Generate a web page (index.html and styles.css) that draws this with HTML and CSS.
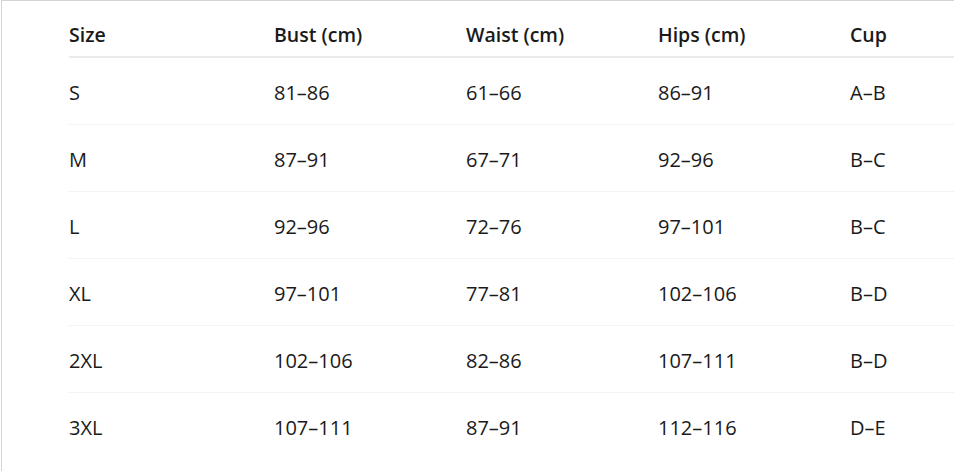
FILE: index.html
```html
<!DOCTYPE html>
<html lang="en">
<head>
<meta charset="utf-8">
<link rel="stylesheet" href="styles.css">
</head>
<body>
<div class="frame">
  <table class="sizes">
    <colgroup>
      <col class="c1"><col class="c2"><col class="c3"><col class="c4"><col class="c5">
    </colgroup>
    <thead>
      <tr><th>Size</th><th>Bust (cm)</th><th>Waist (cm)</th><th>Hips (cm)</th><th>Cup</th></tr>
    </thead>
    <tbody>
      <tr><td>S</td><td>81–86</td><td>61–66</td><td>86–91</td><td>A–B</td></tr>
      <tr><td>M</td><td>87–91</td><td>67–71</td><td>92–96</td><td>B–C</td></tr>
      <tr><td>L</td><td>92–96</td><td>72–76</td><td>97–101</td><td>B–C</td></tr>
      <tr><td>XL</td><td>97–101</td><td>77–81</td><td>102–106</td><td>B–D</td></tr>
      <tr><td>2XL</td><td>102–106</td><td>82–86</td><td>107–111</td><td>B–D</td></tr>
      <tr><td>3XL</td><td>107–111</td><td>87–91</td><td>112–116</td><td>D–E</td></tr>
    </tbody>
  </table>
</div>
</body>
</html>
```
FILE: styles.css
```css
html, body {
  margin: 0;
  padding: 0;
  background: #fff;
}
body {
  padding-left: 1px;
  overflow: hidden;
  font-family: "Open Sans", "Noto Sans", sans-serif;
  color: #1a1a1a;
}
.frame {
  border-top: 1px solid #d4d4d4;
  border-left: 1px solid #d4d4d4;
  padding-left: 67px;
  height: 470px;
  overflow: hidden;
}
.sizes {
  border-collapse: collapse;
  table-layout: fixed;
  width: 1000px;
}
.c1 { width: 205px; }
.c2 { width: 192px; }
.c3 { width: 192px; }
.c4 { width: 192px; }
.c5 { width: 219px; }
th, td {
  text-align: left;
  padding: 0;
  white-space: nowrap;
}
th {
  font-size: 19.5px;
  font-weight: 600;
  height: 56px;
  padding-top: 12px;
  box-sizing: border-box;
  vertical-align: middle;
  border-bottom: 2px solid #ebebeb;
}
td {
  font-size: 20px;
  height: 67px;
  padding-top: 3px;
  box-sizing: border-box;
  vertical-align: middle;
  border-bottom: 1px solid #f3f3f3;
}
tbody tr:last-child td {
  border-bottom: none;
}
```
